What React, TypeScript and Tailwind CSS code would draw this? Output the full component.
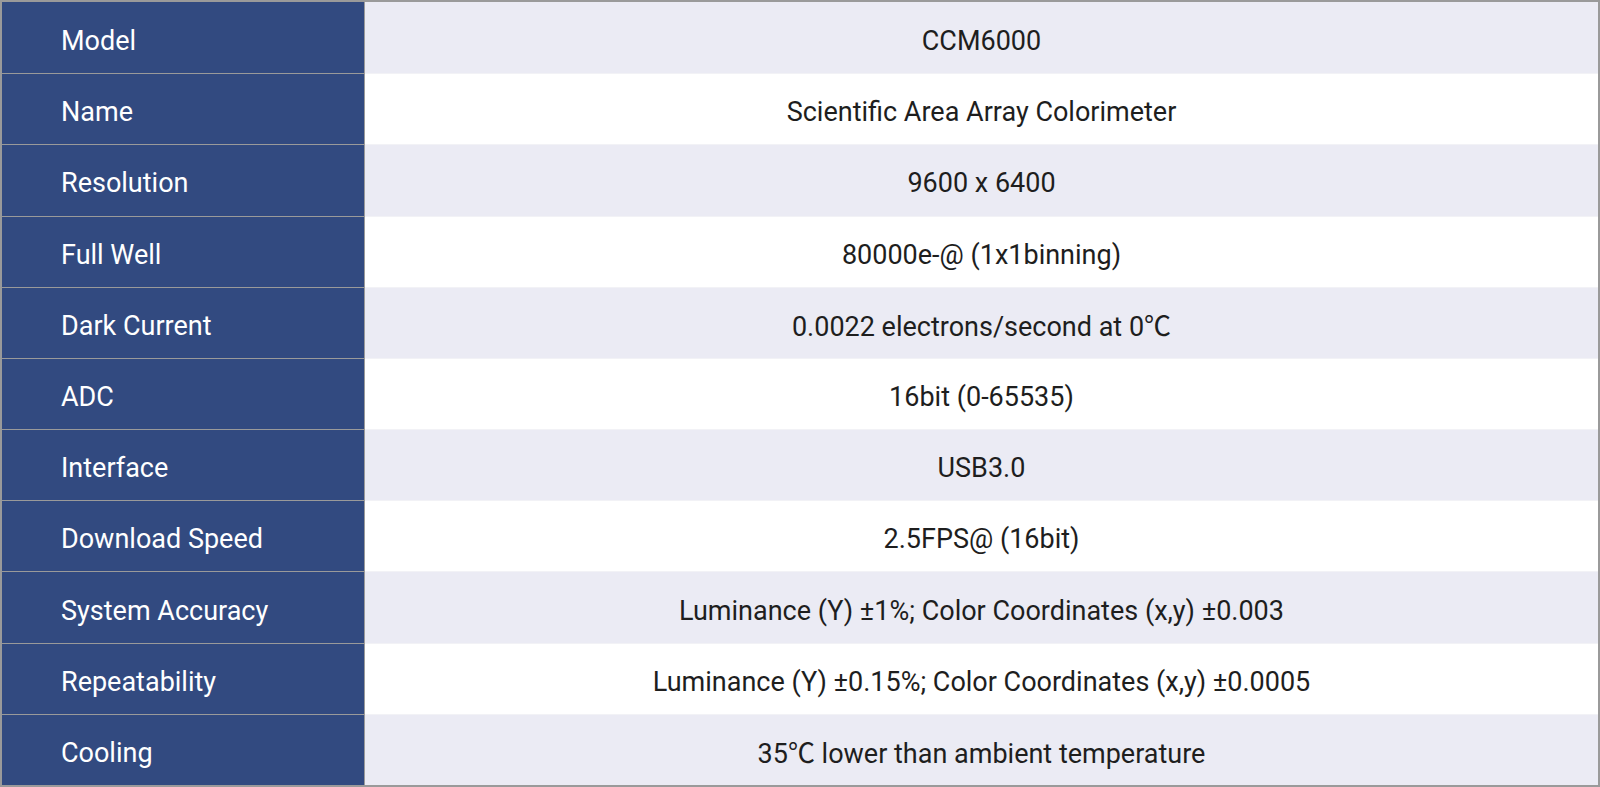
import React from "react";

const rows: [string, string][] = [
  ["Model", "CCM6000"],
  ["Name", "Scientific Area Array Colorimeter"],
  ["Resolution", "9600 x 6400"],
  ["Full Well", "80000e-@ (1x1binning)"],
  ["Dark Current", "0.0022 electrons/second at 0℃"],
  ["ADC", "16bit (0-65535)"],
  ["Interface", "USB3.0"],
  ["Download Speed", "2.5FPS@ (16bit)"],
  ["System Accuracy", "Luminance (Y) ±1%; Color Coordinates (x,y) ±0.003"],
  ["Repeatability", "Luminance (Y) ±0.15%; Color Coordinates (x,y) ±0.0005"],
  ["Cooling", "35℃ lower than ambient temperature"],
];

function Val({ text }: { text: string }) {
  const parts = text.split("℃");
  return (
    <span>
      {parts.map((p, i) => (
        <React.Fragment key={i}>
          {p}
          {i < parts.length - 1 && (
            <span style={{ fontFamily: "'Noto Sans CJK SC', sans-serif" }}>℃</span>
          )}
        </React.Fragment>
      ))}
    </span>
  );
}

export default function App() {
  return (
    <div
      className="w-[1600px] h-[787px] border-2 border-[#9a9a9a] bg-white grid grid-rows-[repeat(11,minmax(0,1fr))] text-[27px] leading-none"
      style={{ fontFamily: "Roboto, 'Noto Sans CJK SC', sans-serif" }}
    >
      {rows.map(([k, v], i) => (
        <div key={k} className="grid grid-cols-[363px_1fr]">
          <div
            className={`flex items-center pl-[59px] pt-[7px] bg-[#324a80] text-white border-r border-[#9a9a9a] ${
              i > 0 ? "border-t border-t-[#9a9a9a]" : ""
            }`}
          >
            {k}
          </div>
          <div
            className={`flex items-center justify-center pt-[7px] text-[#1e1e1e] ${
              i % 2 === 0 ? "bg-[#ebebf4]" : "bg-white"
            } ${i > 0 ? "border-t border-t-[#f2f2f6]" : ""}`}
          >
            <Val text={v} />
          </div>
        </div>
      ))}
    </div>
  );
}
